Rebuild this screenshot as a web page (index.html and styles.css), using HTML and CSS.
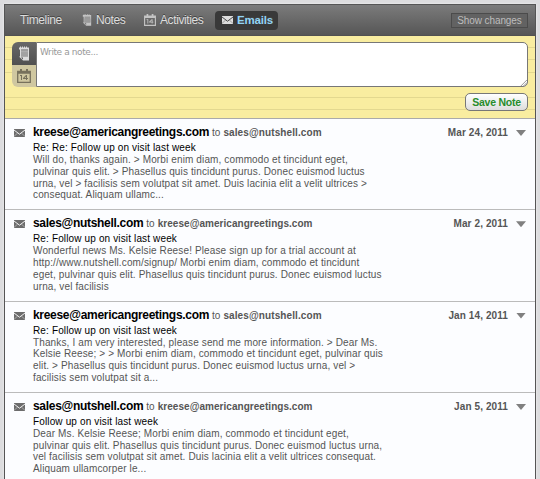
FILE: index.html
```
<!DOCTYPE html>
<html lang="en">
<head>
<meta charset="utf-8">
<title>Emails</title>
<link rel="stylesheet" href="styles.css">
</head>
<body>
<svg class="defs" width="0" height="0">
  <symbol id="note" viewBox="0 0 12 14"><path fill="currentColor" fill-rule="evenodd" d="M1 1h1V0h1v1h1V0h1v1h1V0h1v1h1V0h1v1h2v13H5L1 10h1V3H1zM3 3v1h7V3zM3 5v5h7V5zM3 11l2 2v-2z"/><path fill="currentColor" opacity=".55" d="M3 5h7v5H3z"/></symbol>
  <symbol id="calendar" viewBox="0 0 14 14"><path fill="none" stroke="currentColor" stroke-width="1.3" d="M.7 2.5h12.6v10.8H.7zM1 4h12"/><path fill="currentColor" d="M3 0h2v3H3zM9 0h2v3H9zM3 6h2v5H4V7H3zM10 6v3h1v1h-1v1H9v-1H6V9l3-3zM9 7.4L7.5 9H9z"/></symbol>
  <symbol id="mail" viewBox="0 0 11 8"><path fill="currentColor" d="M0 0h11v8H0z"/><path class="flap" fill="none" stroke-width=".9" d="M0 1l5.5 4.2L11 1"/><path class="flap" fill="none" stroke-width=".4" d="M0 7.4l3.6-3.3M11 7.4L7.4 4.1"/></symbol>
</svg>
<main class="panel">
  <nav class="bar">
    <a class="tab timeline">Timeline</a>
    <a class="tab notes"><svg class="i-note"><use href="#note"/></svg><span>Notes</span></a>
    <a class="tab activities"><svg class="i-cal"><use href="#calendar"/></svg><span>Activities</span></a>
    <a class="tab active"><svg class="i-mail"><use href="#mail"/></svg><span>Emails</span></a>
    <button class="changes">Show changes</button>
  </nav>
  <section class="compose">
    <div class="editor">
      <div class="modes">
        <span class="mode on"><svg class="i-note"><use href="#note"/></svg></span>
        <span class="mode"><svg class="i-cal"><use href="#calendar"/></svg></span>
      </div>
      <div class="field">Write a note...<svg class="grip" viewBox="0 0 8 8"><path d="M1 8l7-7M4 8l4-4" stroke="#888" fill="none"/></svg></div>
    </div>
    <button class="save">Save Note</button>
  </section>
  <article class="mail">
    <svg class="i-mail"><use href="#mail"/></svg>
    <div class="content">
      <header><b class="from">kreese@americangreetings.com</b><span class="to">to</span><b class="rcpt short">sales@nutshell.com</b><time>Mar 24, 2011</time><i class="arrow"></i></header>
      <h3>Re: Re: Follow up on visit last week</h3>
      <p>Will do, thanks again. &gt; Morbi enim diam, commodo et tincidunt eget,<br>pulvinar quis elit. &gt; Phasellus quis tincidunt purus. Donec euismod luctus<br>urna, vel &gt; facilisis sem volutpat sit amet. Duis lacinia elit a velit ultrices &gt;<br>consequat. Aliquam ullamc...</p>
    </div>
  </article>
  <article class="mail">
    <svg class="i-mail"><use href="#mail"/></svg>
    <div class="content">
      <header><b class="from">sales@nutshell.com</b><span class="to">to</span><b class="rcpt">kreese@americangreetings.com</b><time>Mar 2, 2011</time><i class="arrow"></i></header>
      <h3>Re: Follow up on visit last week</h3>
      <p>Wonderful news Ms. Kelsie Reese! Please sign up for a trial account at<br>http://www.nutshell.com/signup/ Morbi enim diam, commodo et tincidunt<br>eget, pulvinar quis elit. Phasellus quis tincidunt purus. Donec euismod luctus<br>urna, vel facilisis</p>
    </div>
  </article>
  <article class="mail">
    <svg class="i-mail"><use href="#mail"/></svg>
    <div class="content">
      <header><b class="from">kreese@americangreetings.com</b><span class="to">to</span><b class="rcpt short">sales@nutshell.com</b><time>Jan 14, 2011</time><i class="arrow"></i></header>
      <h3>Re: Follow up on visit last week</h3>
      <p>Thanks, I am very interested, please send me more information. &gt; Dear Ms.<br>Kelsie Reese; &gt; &gt; Morbi enim diam, commodo et tincidunt eget, pulvinar quis<br>elit. &gt; Phasellus quis tincidunt purus. Donec euismod luctus urna, vel &gt;<br>facilisis sem volutpat sit a...</p>
    </div>
  </article>
  <article class="mail">
    <svg class="i-mail"><use href="#mail"/></svg>
    <div class="content">
      <header><b class="from">sales@nutshell.com</b><span class="to">to</span><b class="rcpt">kreese@americangreetings.com</b><time>Jan 5, 2011</time><i class="arrow"></i></header>
      <h3>Follow up on visit last week</h3>
      <p>Dear Ms. Kelsie Reese; Morbi enim diam, commodo et tincidunt eget,<br>pulvinar quis elit. Phasellus quis tincidunt purus. Donec euismod luctus urna,<br>vel facilisis sem volutpat sit amet. Duis lacinia elit a velit ultrices consequat.<br>Aliquam ullamcorper le...</p>
    </div>
  </article>
</main>
</body>
</html>
```
FILE: styles.css
```
* { box-sizing: border-box; }
html, body { height: 100%; overflow: hidden; }
body { margin: 0; padding: 4px 4px 0 4px; background: #dcdcde; font-family: "Liberation Sans", Arial, sans-serif; white-space: nowrap; }
.defs { display: block; height: 0; }
button { font-family: inherit; padding: 0; margin: 0; }
.panel { border: 1px solid #555; border-bottom: 0; background: #fcfdff; height: 475px; overflow: hidden; box-shadow: 0 0 2px #f5f5f5; }
.bar { height: 31px; display: flex; align-items: center; background: linear-gradient(#7b7b7b, #565656); border-bottom: 1px solid #515151; padding: 0 7px 0 15px; }
.tab { display: flex; align-items: center; color: #dedede; font-size: 12px; letter-spacing: -.4px; text-shadow: 0 -1px #444; }
.tab svg { color: #c4c4c4; }
.i-note { width: 10px; height: 12px; }
.i-cal { width: 12px; height: 12px; }
.i-mail { width: 11px; height: 8px; --flap: #fff; }
.flap { stroke: var(--flap); }
.timeline { width: 62px; }
.notes { width: 62px; gap: 4px; }
.activities { width: 71px; gap: 4px; }
.active { width: 63px; height: 19px; padding-left: 7px; gap: 4px; border-radius: 4px; background: #393939; color: #92d4f5; font-weight: bold; font-size: 11.5px; letter-spacing: -.2px; }
.active svg { color: #ddd; --flap: #393939; }
.changes { margin-left: auto; width: 77px; height: 15px; border: 1px solid #4b4b4b; background: #626262; color: #bdbdbd; font-size: 10px; letter-spacing: -.1px; }
.compose { height: 83px; padding: 6px 7px 0; border-bottom: 1px solid #aaa; background: repeating-linear-gradient(transparent 0 11px, #e3d88f 11px 12px, transparent 12px 12.5px), #f9eda0; }
.editor { height: 45px; display: flex; }
.modes { width: 24px; border-radius: 6px 0 0 6px; overflow: hidden; }
.mode { display: flex; height: 23px; align-items: center; justify-content: center; background: linear-gradient(#686868, #505050); color: #ddd; }
.mode:last-child { height: 22px; background: #cfc7a0; color: #77715c; }
.mode .i-note { width: 12px; height: 15px; }
.mode .i-cal { width: 14px; height: 14px; }
.field { position: relative; flex: 1; border: 1px solid #777; border-radius: 0 5px 5px 0; background: #fff; color: #999; font: 9px/16px "DejaVu Sans", sans-serif; letter-spacing: -.4px; padding: 1px 3px; }
.grip { position: absolute; right: 0; bottom: 0; width: 7px; height: 7px; }
.save { display: block; margin: 6px 0 0 auto; width: 63px; height: 18px; border: 1px solid #777; border-radius: 5px; background: linear-gradient(#fff, #ddd); color: #278c2c; font-size: 10.5px; font-weight: bold; letter-spacing: -.25px; }
.mail { height: 91.3px; display: flex; border-bottom: 1px solid #bbb; padding: 6px 9px 0 9px; }
.mail > svg { color: #6c6c6c; margin-top: 4px; flex: none; }
.content { flex: 1; margin-left: 8px; }
header { display: flex; height: 17px; line-height: 15px; align-items: baseline; color: #555; font-size: 10px; }
.from { color: #000; font-size: 12px; letter-spacing: -.3px; }
.to { margin: 0 3px; }
.rcpt { letter-spacing: .04px; }
.rcpt.short { letter-spacing: .1px; }
time { margin-left: auto; font-weight: bold; letter-spacing: .1px; }
.arrow { width: 10px; height: 6px; margin-left: 8px; background: #808080; clip-path: polygon(0 0, 100% 0, 50% 100%); }
h3 { margin: 0; color: #000; font-size: 10px; line-height: 12px; font-weight: normal; letter-spacing: .14px; }
p { margin: 0; color: #555; font-size: 10px; line-height: 11.75px; letter-spacing: .13px; }
```
